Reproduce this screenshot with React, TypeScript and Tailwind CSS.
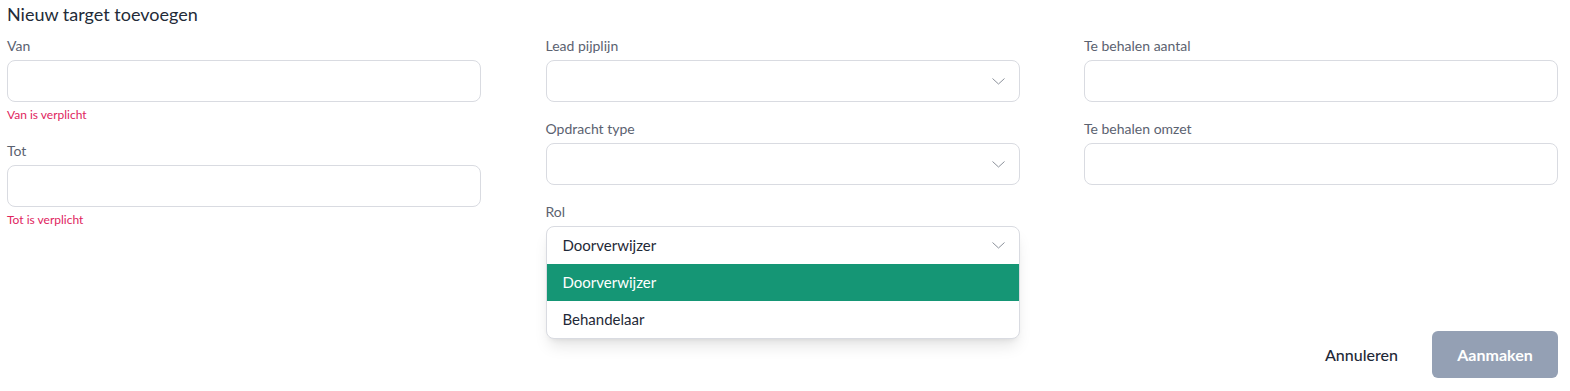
import React from "react";

function Chevron() {
    return (
        <svg width="13" height="7" viewBox="0 0 13 7" fill="none" className="shrink-0">
            <path d="M0.5 0.5L6.5 6L12.5 0.5" stroke="#8b909a" strokeWidth="1" />
        </svg>
    );
}

function Label({ children }: { children: React.ReactNode }) {
    return <label className="block h-5 text-[14px] leading-5 text-[#5b6270] mb-1">{children}</label>;
}

function TextField({ label, error }: { label: string; error?: string }) {
    return (
        <div>
            <Label>{label}</Label>
            <input
                type="text"
                className="block w-full h-[42px] rounded-lg border border-[#d9dbe1] bg-white px-4 text-[15px] text-[#1f2937] outline-none"
            />
            {error && <p className="mt-[5px] h-4 text-[12px] leading-4 text-[#e0245e]">{error}</p>}
        </div>
    );
}

function SelectField({ label }: { label: string }) {
    return (
        <div>
            <Label>{label}</Label>
            <div className="flex items-center justify-end h-[42px] rounded-lg border border-[#d9dbe1] bg-white pr-[14px]">
                <Chevron />
            </div>
        </div>
    );
}

export default function App() {
    const options = ["Doorverwijzer", "Behandelaar"];
    const selected = "Doorverwijzer";

    return (
        <div className="bg-white w-[1570px] h-[391px] pl-[7px] pr-[12px] pt-[2px] font-['Lato','Noto_Sans',sans-serif] text-[#1f2937]">
            <h2 className="text-[18px] leading-6 text-[#232b38] mb-[10px]">Nieuw target toevoegen</h2>

            <div className="grid grid-cols-3 gap-x-[64.5px]">
                <div className="flex flex-col gap-[18px]">
                    <TextField label="Van" error="Van is verplicht" />
                    <TextField label="Tot" error="Tot is verplicht" />
                </div>

                <div className="flex flex-col gap-[17px]">
                    <SelectField label="Lead pijplijn" />
                    <SelectField label="Opdracht type" />
                    <div>
                        <Label>Rol</Label>
                        <div className="relative h-[42px]">
                            <div className="absolute top-0 left-0 right-0 z-10 rounded-lg border border-[#d9dbe1] bg-white shadow-lg overflow-hidden">
                                <div className="flex items-center justify-between h-[37px] pl-4 pr-[14px] text-[15px]">
                                    <span>{selected}</span>
                                    <Chevron />
                                </div>
                                {options.map((opt) => (
                                    <div
                                        key={opt}
                                        className={
                                            opt === selected
                                                ? "flex items-center h-[37px] px-4 text-[15px] bg-[#159675] text-white"
                                                : "flex items-center h-[37px] px-4 text-[15px] text-[#1f2937]"
                                        }
                                    >
                                        {opt}
                                    </div>
                                ))}
                            </div>
                        </div>
                    </div>
                </div>

                <div className="flex flex-col gap-[17px]">
                    <TextField label="Te behalen aantal" />
                    <TextField label="Te behalen omzet" />
                </div>
            </div>

            <div className="flex items-center justify-end gap-[18px] mt-[63px]">
                <button className="h-[47px] px-4 text-[16px] font-medium text-[#1f2937]">Annuleren</button>
                <button className="h-[47px] w-[126px] rounded-md bg-[#94a0b4] text-[16px] font-bold text-white">Aanmaken</button>
            </div>
        </div>
    );
}
